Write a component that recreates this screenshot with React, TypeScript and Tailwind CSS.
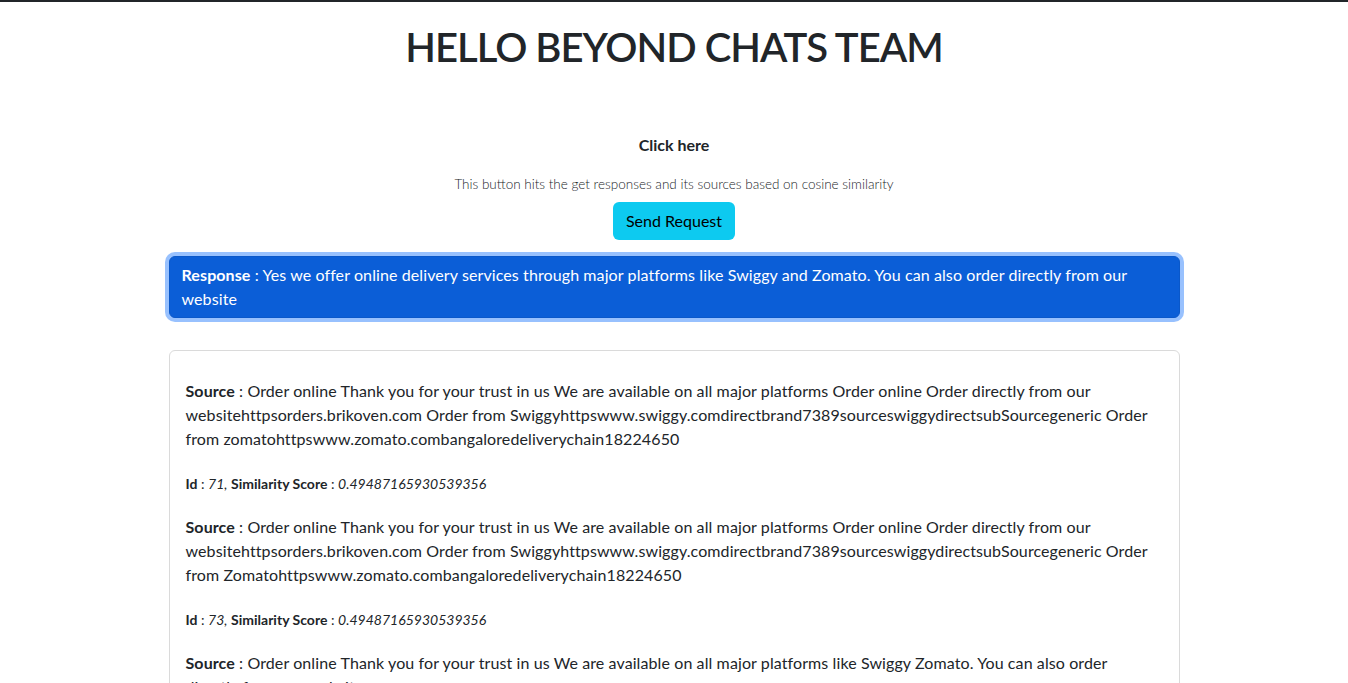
import React from 'react';

type SourceItem = {
  id: number;
  score: string;
  text: string;
};

const sources: SourceItem[] = [
  {
    id: 71,
    score: '0.49487165930539356',
    text: 'Order online Thank you for your trust in us We are available on all major platforms Order online Order directly from our websitehttpsorders.brikoven.com Order from Swiggyhttpswww.swiggy.comdirectbrand7389sourceswiggydirectsubSourcegeneric Order from zomatohttpswww.zomato.combangaloredeliverychain18224650',
  },
  {
    id: 73,
    score: '0.49487165930539356',
    text: 'Order online Thank you for your trust in us We are available on all major platforms Order online Order directly from our websitehttpsorders.brikoven.com Order from Swiggyhttpswww.swiggy.comdirectbrand7389sourceswiggydirectsubSourcegeneric Order from Zomatohttpswww.zomato.combangaloredeliverychain18224650',
  },
  {
    id: 12,
    score: '0.4123908812093411',
    text: 'Order online Thank you for your trust in us We are available on all major platforms like Swiggy Zomato. You can also order directly from our website',
  },
];

const App: React.FC = () => {
  return (
    <div className="min-h-screen bg-white border-t-2 border-[#212529] text-[#212529] font-['Lato','Segoe_UI',sans-serif]">
      <h1 className="pt-[21px] text-center text-[40px] leading-[48px] font-semibold tracking-[-1px]">HELLO BEYOND CHATS TEAM</h1>

      <div className="mt-[62px] flex flex-col items-center">
        <p className="text-base leading-6 font-bold">Click here</p>
        <p className="mt-[17px] text-[13.5px] leading-[20px] font-light">
          This button hits the get responses and its sources based on cosine similarity
        </p>
        <button className="mt-2 h-[38px] px-[13px] rounded-md bg-[#0dcaf0] text-base text-black">Send Request</button>
      </div>

      <div className="mx-auto w-3/4 tracking-[0.1px]">
        <button className="mt-4 w-full text-left rounded-md border border-[#0a58ca] bg-[#0b5ed7] px-3 py-1.5 text-base leading-6 text-white ring-4 ring-[#3184fd]/50">
          <b>Response</b> : Yes we offer online delivery services through major platforms like Swiggy and Zomato. You can also order directly from our website
        </button>

        <div className="mt-8 rounded-md border border-[#dadada] px-4 pt-7 pb-6">
          {sources.map((s) => (
            <div key={s.id} className="mb-[21px]">
              <p className="text-base leading-6">
                <b>Source</b> : {s.text}
              </p>
              <p className="mt-[22px] text-sm leading-[21px] tracking-normal">
                <b>Id</b> : <i>{s.id},</i> <b>Similarity Score</b> : <i>{s.score}</i>
              </p>
            </div>
          ))}
        </div>
      </div>
    </div>
  );
};

export default App;
